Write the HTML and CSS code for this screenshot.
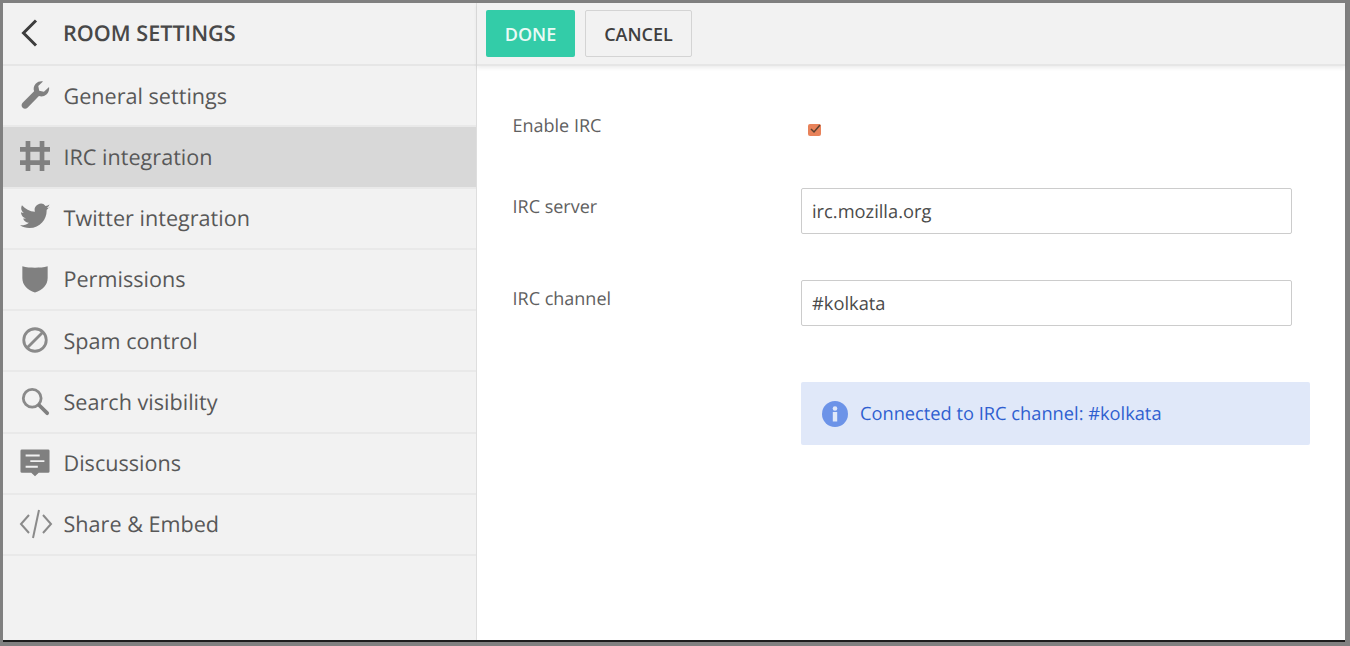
FILE: index.html
```html
<!DOCTYPE html>
<html lang="en">
<head>
    <meta charset="UTF-8">
    <title>Room settings</title>
    <link rel="stylesheet" href="styles.css">
</head>
<body>
    <div class="window">
        <div class="sidebar">
            <div class="sidebar-head">
                <svg class="back" width="20" height="30" viewBox="0 0 20 30"><path d="M17 2.500 4.500 15 17 27.500" fill="none" stroke="#3d3d3d" stroke-width="3"/></svg>
                <span>ROOM SETTINGS</span>
            </div>
            <a class="item">
                <svg class="icon" viewBox="0 0 32 32"><path d="M31 7.500c.5 3-.5 6-2.800 8-2.300 2-5.300 2.500-8 1.600L8 29.500c-1.500 1.500-3.700 1.500-5.200 0-1.500-1.500-1.500-3.700 0-5.200L15 12c-.9-2.800-.3-5.800 1.700-8C18.800 1.800 21.800 1 24.500 1.500L19.500 6.500l1 5 5 1z" fill="#808080"/></svg>
                General settings
            </a>
            <a class="item active">
                <svg class="icon" viewBox="0 0 32 32"><path d="M8.500 0v32M23.500 0v32M0 9h32M0 23h32" fill="none" stroke="#808080" stroke-width="5"/></svg>
                IRC integration
            </a>
            <a class="item">
                <svg class="icon" viewBox="0 0 32 32"><path d="M31.500 3.500c-1.100.6-2.300 1-3.600 1.100 1.300-.8 2.300-2 2.800-3.500-1.200.7-2.600 1.300-4 1.500A6.300 6.300 0 0 0 15.800 8.400C10.500 8.100 5.700 5.600 2.500 1.700 1 4.400 1.700 7.900 4.400 9.700c-1 0-2-.3-2.900-.8 0 3 2.200 5.700 5.100 6.300-.9.300-1.900.3-2.900.1.800 2.500 3.200 4.300 5.900 4.400-2.700 2.100-6 3-9.300 2.600 2.800 1.800 6.100 2.900 9.700 2.900 11.600 0 18.200-9.800 17.800-18.600 1.100-.9 2-1.900 2.700-3.100z" fill="#808080" transform="translate(-.5 .5) scale(1.040)"/></svg>
                Twitter integration
            </a>
            <a class="item">
                <svg class="icon" viewBox="0 0 32 32"><path d="M2.500 2.500c4 1.200 9 1.500 13.500 1.500s9.500-.3 13.500-1.500V15c0 7.500-5.500 13-13.500 15.500C8 28 2.500 22.500 2.500 15z" fill="#808080"/></svg>
                Permissions
            </a>
            <a class="item">
                <svg class="icon" viewBox="0 0 32 32"><circle cx="16" cy="16" r="12" fill="none" stroke="#8a8a8a" stroke-width="3"/><path d="M8 24 24 8" stroke="#8a8a8a" stroke-width="3"/></svg>
                Spam control
            </a>
            <a class="item">
                <svg class="icon" viewBox="0 0 32 32"><circle cx="13" cy="13" r="9.500" fill="none" stroke="#8a8a8a" stroke-width="3"/><path d="m20.500 20.500 8.500 8.500" stroke="#808080" stroke-width="4" stroke-linecap="round"/></svg>
                Search visibility
            </a>
            <a class="item">
                <svg class="icon" viewBox="0 0 32 32"><path d="M2 1.500h28a1.500 1.500 0 0 1 1.500 1.500v22a1.500 1.500 0 0 1-1.500 1.500h-10L16 30l-4-3.500H2A1.500 1.500 0 0 1 .5 25V3A1.500 1.500 0 0 1 2 1.500z" fill="#808080"/><path d="M6 8h15M11 14h15M6 20h13" stroke="#f1f1f1" stroke-width="2"/></svg>
                Discussions
            </a>
            <a class="item">
                <svg class="icon code" viewBox="0 0 34 32"><path d="M10 7 2 16l8 9M24 7l8 9-8 9" fill="none" stroke="#8a8a8a" stroke-width="2"/><path d="M20 2 14 30" stroke="#8a8a8a" stroke-width="2"/></svg>
                Share &amp; Embed
            </a>
        </div>
        <div class="main">
            <div class="toolbar">
                <button class="btn btn-done">DONE</button>
                <button class="btn btn-cancel">CANCEL</button>
            </div>
            <div class="form">
                <label class="label-enable">Enable IRC</label>
                <div class="check-cell">
                    <span class="check">
                        <svg width="15" height="12" viewBox="0 0 15 12"><path d="m3 5 3 3 6-7" fill="none" stroke="#5b4030" stroke-width="1.500"/></svg>
                    </span>
                </div>
                <label>IRC server</label>
                <input type="text" value="irc.mozilla.org">
                <label>IRC channel</label>
                <input type="text" value="#kolkata">
                <div class="notice">
                    <svg width="26" height="26" viewBox="0 0 26 26"><circle cx="13" cy="13" r="13" fill="#6c93e8"/><circle cx="13" cy="7.500" r="2.300" fill="#e0e8f9"/><rect x="10.800" y="11" width="4.400" height="9.500" fill="#e0e8f9"/></svg>
                    <span>Connected to IRC channel: #kolkata</span>
                </div>
            </div>
        </div>
    </div>
</body>
</html>
```

FILE: styles.css
```css
html, body {
    margin: 0;
    height: 100%;
    overflow: hidden;
}
body {
    background-color: #808080;
    font-family: "Open Sans", sans-serif;
    text-rendering: geometricPrecision;
    padding: 3px 5px 4px 3px;
    box-sizing: border-box;
}
.window {
    display: flex;
    height: 637px;
    background: white;
    border-bottom: 2px solid #1c1c1c;
}
.sidebar {
    width: 473px;
    background-color: #f2f2f2;
    border-right: 1px solid #dedede;
    flex-shrink: 0;
}
.sidebar-head {
    display: flex;
    align-items: center;
    height: 61px;
    border-bottom: 2px solid #e6e6e6;
    font-size: 21.6px;
    font-weight: 600;
    color: #484848;
}
.back {
    margin-left: 16px;
    margin-right: 24px;
    margin-top: -1px;
}
.item {
    display: flex;
    align-items: center;
    box-sizing: border-box;
    height: 61.25px;
    padding-top: 1px;
    border-bottom: 2px solid #e9e9e9;
    font-size: 21.6px;
    color: #585858;
}
.item.active {
    background-color: #d8d8d8;
}
.icon {
    width: 30px;
    height: 30px;
    margin-top: -2px;
    margin-left: 17px;
    margin-right: 13.5px;
    flex-shrink: 0;
}
.icon.code {
    width: 34px;
    height: 32px;
    margin-left: 16px;
    margin-right: 10.5px;
}
.main {
    flex: 1;
}
.toolbar {
    display: flex;
    gap: 10px;
    box-sizing: border-box;
    height: 63px;
    padding: 7px 0 0 9px;
    background-color: #f2f2f2;
    border-bottom: 2px solid #e6e6e6;
    box-shadow: 0 2px 4px rgba(0, 0, 0, 0.08);
}
.btn {
    height: 47px;
    font-family: "Open Sans", sans-serif;
    font-size: 18px;
    font-weight: 600;
    border-radius: 2px;
    cursor: pointer;
}
.btn-done {
    width: 89px;
    background-color: #33cca8;
    color: #eafaf6;
    border: none;
}
.btn-cancel {
    width: 107px;
    background-color: #f2f2f2;
    color: #3f3f3f;
    border: 1px solid #d4d4d4;
}
.form {
    display: grid;
    grid-template-columns: 288.5px 491px;
    grid-template-rows: 40px 46px 46px;
    row-gap: 46px;
    padding: 36px 0 0 35.5px;
    font-size: 18px;
    color: #606060;
}
.form label {
    line-height: 39px;
}
.form .label-enable {
    margin-top: 5px;
}
.check-cell {
    padding-left: 7px;
    padding-top: 22px;
}
.check {
    position: relative;
    display: block;
    width: 13px;
    height: 12px;
    background-color: #e8825a;
    border-radius: 2px;
}
.check svg {
    position: absolute;
    left: 0;
    top: 0;
}
.form input {
    height: 46px;
    box-sizing: border-box;
    padding: 0 10px;
    border: 1px solid #ccc;
    border-radius: 2px;
    font-family: "Open Sans", sans-serif;
    font-size: 18.3px;
    text-rendering: geometricPrecision;
    color: #4a4a4a;
}
.notice {
    grid-column: 2;
    display: flex;
    align-items: center;
    gap: 12px;
    width: 509px;
    height: 63px;
    box-sizing: border-box;
    margin-top: 10px;
    padding-left: 21px;
    background-color: #e0e8f9;
    border-radius: 2px;
    font-size: 18.25px;
    color: #2f5fd0;
}
```
